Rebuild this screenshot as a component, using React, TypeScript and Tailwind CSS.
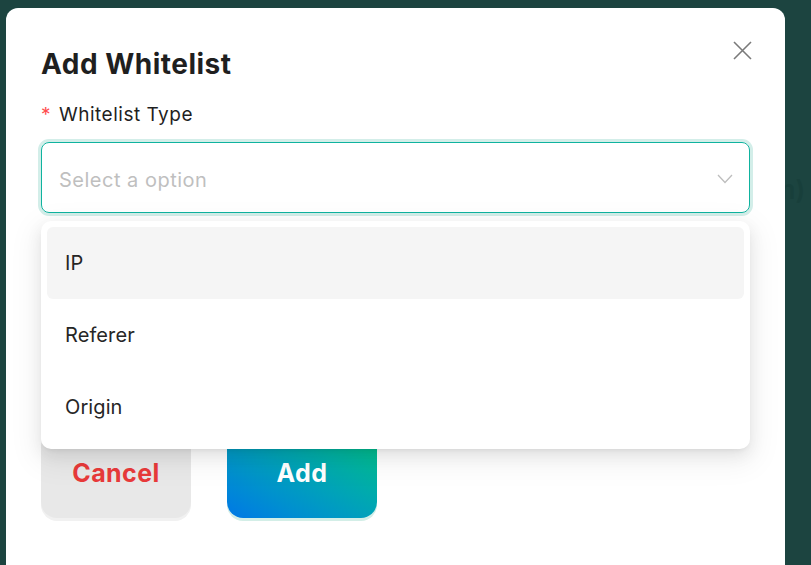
import React from "react";

const options = ["IP", "Referer", "Origin"];

const App = () => {
  return (
    <div
      className="relative h-[565px] w-full overflow-hidden bg-[#1c4440] pl-[6px] pr-[26px] pt-[8px]"
      style={{ fontFamily: "Inter, 'Noto Sans', sans-serif" }}
    >
      {/* page text behind the overlay */}
      <span className="absolute left-[772px] top-[170px] text-[26px] font-semibold text-[#183f3b]">
        m)
      </span>

      <div className="relative h-full w-[779px] rounded-t-[12px] bg-white px-[35px] pt-[40px]">
        <button className="absolute right-[32px] top-[32px] text-[#7a7a7a]">
          <svg width="21" height="21" viewBox="0 0 21 21" fill="none">
            <path d="M2 2L19 19M19 2L2 19" stroke="currentColor" strokeWidth="1.6" />
          </svg>
        </button>

        <h2 className="text-[28px] font-bold leading-[32px] tracking-[0.5px] text-[#1f1f1f]">
          Add Whitelist
        </h2>

        <div className="mt-[23px] flex items-center text-[19px] leading-[24px] tracking-[0.5px] text-[#1f1f1f]">
          <span className="mr-[8px] text-[#ff4d4f]">*</span>
          Whitelist Type
        </div>

        <div className="relative mt-[15px]">
          <div className="flex h-[71px] items-center justify-between rounded-[8px] border-[1.5px] border-[#0fb39f] pl-[17px] pr-[16px] shadow-[0_0_0_3px_#d3eee9]">
            <span className="pt-[5px] text-[20px] tracking-[0.5px] text-[#bfbfbf]">Select a option</span>
            <svg width="16" height="10" viewBox="0 0 16 10" fill="none" className="mt-[3px] text-[#bdbdbd]">
              <path d="M1 1L8 8.5L15 1" stroke="currentColor" strokeWidth="1.3" />
            </svg>
          </div>

          <div className="absolute left-0 right-0 top-[79px] z-10 rounded-[10px] bg-white p-[6px] shadow-[0_6px_16px_0_rgba(0,0,0,0.08),0_3px_6px_-4px_rgba(0,0,0,0.12),0_9px_28px_8px_rgba(0,0,0,0.05)]">
            {options.map((o, i) => (
              <div
                key={o}
                className={`flex h-[72px] items-center rounded-[6px] px-[18px] text-[20px] tracking-[0.1px] text-[#262626] ${
                  i === 0 ? "bg-[#f5f5f5]" : ""
                }`}
              >
                {o}
              </div>
            ))}
          </div>
        </div>

        <div className="mt-[217px] flex gap-[36px]">
          <button className="flex h-[88px] w-[150px] items-center justify-center rounded-[16px] bg-[#e8e8e8] text-[25px] font-bold tracking-[0.4px] text-[#e83a3a] shadow-[0_3px_0_#f1f1f1]">
            Cancel
          </button>
          <button className="flex h-[88px] w-[150px] items-center justify-center rounded-[16px] bg-linear-to-tr from-[#0677e6] to-[#00c47f] text-[25px] font-bold tracking-[0.4px] text-white shadow-[0_3px_0_#d3eee7]">
            Add
          </button>
        </div>
      </div>
    </div>
  );
};

export default App;
